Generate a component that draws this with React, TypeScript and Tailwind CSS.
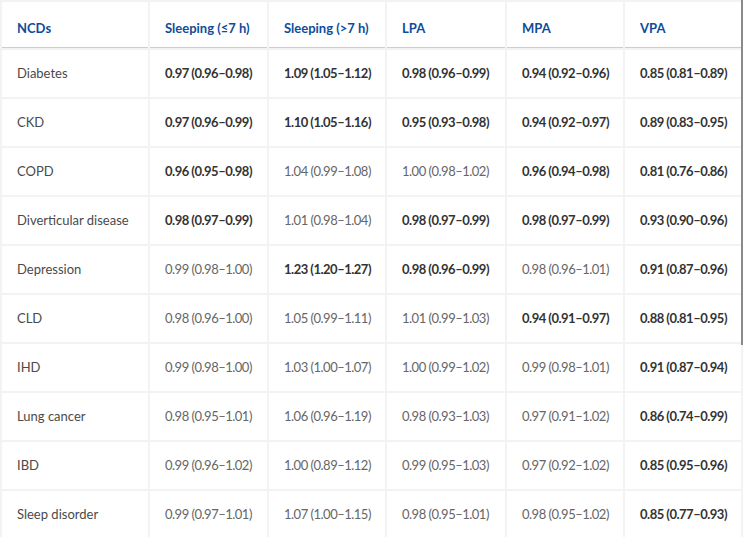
import React from 'react';

type Cell = { v: string; b?: boolean };

const headers = ['NCDs', 'Sleeping (≤7 h)', 'Sleeping (>7 h)', 'LPA', 'MPA', 'VPA'];

const rows: { name: string; cells: Cell[] }[] = [
  { name: 'Diabetes', cells: [
    { v: '0.97 (0.96–0.98)', b: true }, { v: '1.09 (1.05–1.12)', b: true }, { v: '0.98 (0.96–0.99)', b: true }, { v: '0.94 (0.92–0.96)', b: true }, { v: '0.85 (0.81–0.89)', b: true } ] },
  { name: 'CKD', cells: [
    { v: '0.97 (0.96–0.99)', b: true }, { v: '1.10 (1.05–1.16)', b: true }, { v: '0.95 (0.93–0.98)', b: true }, { v: '0.94 (0.92–0.97)', b: true }, { v: '0.89 (0.83–0.95)', b: true } ] },
  { name: 'COPD', cells: [
    { v: '0.96 (0.95–0.98)', b: true }, { v: '1.04 (0.99–1.08)' }, { v: '1.00 (0.98–1.02)' }, { v: '0.96 (0.94–0.98)', b: true }, { v: '0.81 (0.76–0.86)', b: true } ] },
  { name: 'Diverticular disease', cells: [
    { v: '0.98 (0.97–0.99)', b: true }, { v: '1.01 (0.98–1.04)' }, { v: '0.98 (0.97–0.99)', b: true }, { v: '0.98 (0.97–0.99)', b: true }, { v: '0.93 (0.90–0.96)', b: true } ] },
  { name: 'Depression', cells: [
    { v: '0.99 (0.98–1.00)' }, { v: '1.23 (1.20–1.27)', b: true }, { v: '0.98 (0.96–0.99)', b: true }, { v: '0.98 (0.96–1.01)' }, { v: '0.91 (0.87–0.96)', b: true } ] },
  { name: 'CLD', cells: [
    { v: '0.98 (0.96–1.00)' }, { v: '1.05 (0.99–1.11)' }, { v: '1.01 (0.99–1.03)' }, { v: '0.94 (0.91–0.97)', b: true }, { v: '0.88 (0.81–0.95)', b: true } ] },
  { name: 'IHD', cells: [
    { v: '0.99 (0.98–1.00)' }, { v: '1.03 (1.00–1.07)' }, { v: '1.00 (0.99–1.02)' }, { v: '0.99 (0.98–1.01)' }, { v: '0.91 (0.87–0.94)', b: true } ] },
  { name: 'Lung cancer', cells: [
    { v: '0.98 (0.95–1.01)' }, { v: '1.06 (0.96–1.19)' }, { v: '0.98 (0.93–1.03)' }, { v: '0.97 (0.91–1.02)' }, { v: '0.86 (0.74–0.99)', b: true } ] },
  { name: 'IBD', cells: [
    { v: '0.99 (0.96–1.02)' }, { v: '1.00 (0.89–1.12)' }, { v: '0.99 (0.95–1.03)' }, { v: '0.97 (0.92–1.02)' }, { v: '0.85 (0.95–0.96)', b: true } ] },
  { name: 'Sleep disorder', cells: [
    { v: '0.99 (0.97–1.01)' }, { v: '1.07 (1.00–1.15)' }, { v: '0.98 (0.95–1.01)' }, { v: '0.98 (0.95–1.02)' }, { v: '0.85 (0.77–0.93)', b: true } ] },
];

export default function App() {
  return (
    <div className="relative w-[743px] h-[537px] overflow-hidden bg-[#f3f3f3] font-['Lato',sans-serif] text-[13px]">
      <div className="w-[741px] pt-[2px] pl-[2px] grid grid-cols-[146px_117px_116px_118px_116px_1fr] gap-x-[2px] gap-y-[2px]">
        {headers.map((h) => (
          <div key={h} className="h-[46px] bg-white border-b border-[#c9cbdf] pl-[15px] pt-[17px] font-bold text-[#0f4c9b]">
            {h}
          </div>
        ))}
        {rows.map((r) => (
          <React.Fragment key={r.name}>
            <div className="h-[47px] bg-white flex items-center pl-[15px] text-[#4a4a4a]">{r.name}</div>
            {r.cells.map((c, i) => (
              <div
                key={i}
                className={`h-[47px] bg-white flex items-center pl-[15px] tracking-[-0.5px] ${c.b ? 'font-bold text-[#333333]' : 'text-[#666666]'}`}
              >
                {c.v}
              </div>
            ))}
          </React.Fragment>
        ))}
      </div>
      <div className="absolute right-0 top-0 w-[2px] h-[345px] bg-[#8a8a8a]" />
    </div>
  );
}
